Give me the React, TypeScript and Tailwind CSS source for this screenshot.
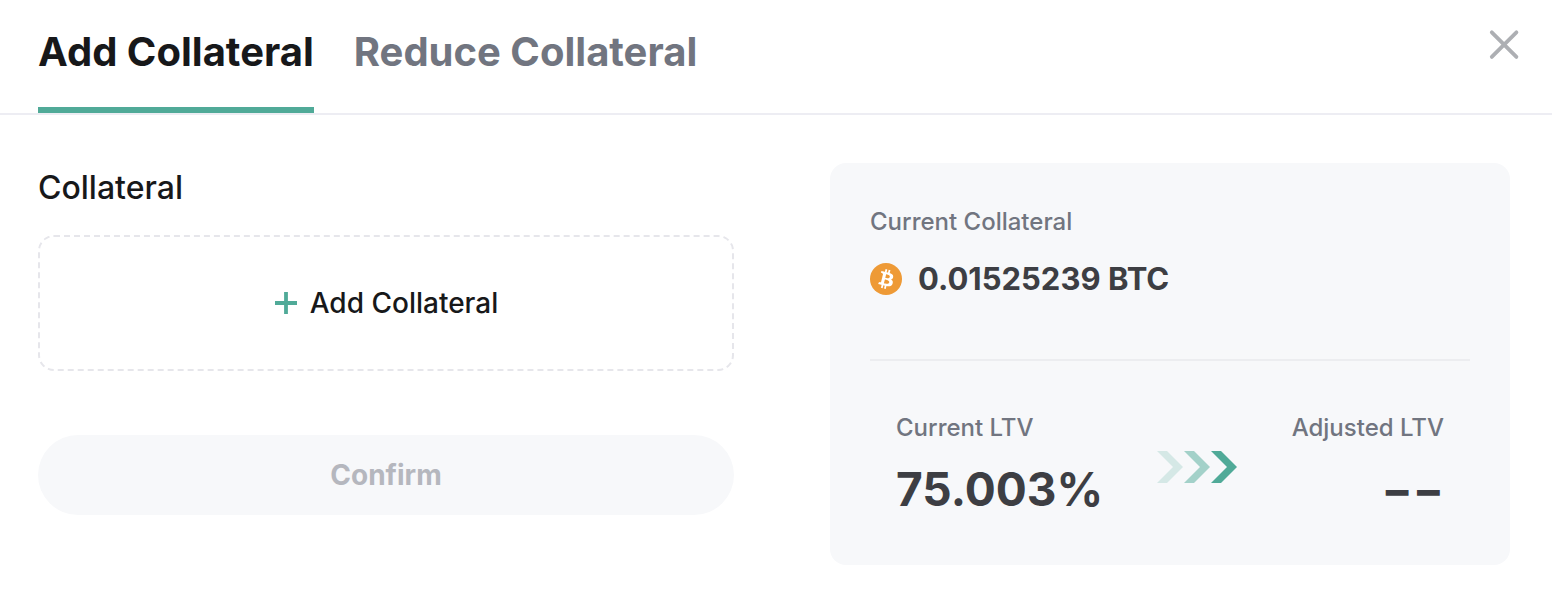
import { useState } from "react";

const tabs = ["Add Collateral", "Reduce Collateral"];

const BitcoinIcon = () => (
  <svg className="w-8 h-8 shrink-0" viewBox="0 0 32 32" aria-hidden="true">
    <circle cx="16" cy="16" r="16" fill="#ee9a36" />
    <path
      fill="#fff"
      d="M23.189 14.02c.314-2.096-1.283-3.223-3.465-3.975l.708-2.84-1.728-.43-.69 2.765c-.454-.114-.92-.22-1.385-.326l.695-2.783L15.596 6l-.708 2.839c-.376-.086-.746-.17-1.104-.26l.002-.009-2.384-.595-.46 1.846s1.283.294 1.256.312c.7.175.826.638.805 1.006l-.806 3.235c.048.012.11.03.18.057l-.183-.045-1.13 4.532c-.086.212-.303.531-.793.41.018.025-1.256-.313-1.256-.313l-.858 1.978 2.25.561c.418.105.828.215 1.231.318l-.715 2.872 1.727.43.708-2.84c.472.127.93.245 1.378.357l-.706 2.828 1.728.43.715-2.866c2.948.558 5.164.333 6.097-2.333.752-2.146-.037-3.385-1.588-4.192 1.13-.26 1.98-1.003 2.207-2.538zm-3.95 5.538c-.533 2.147-4.148.986-5.32.695l.95-3.805c1.172.293 4.929.872 4.37 3.11zm.535-5.569c-.487 1.953-3.495.96-4.47.717l.86-3.45c.975.243 4.118.696 3.61 2.733z"
    />
  </svg>
);

const Arrows = () => (
  <svg
    className="w-20 h-8 shrink-0"
    viewBox="0 0 80 32"
    fill="#50aa98"
    aria-hidden="true"
  >
    <path opacity="0.2" d="M0 0h10l16 16-16 16H0l16-16z" />
    <path opacity="0.5" d="M27 0h10l16 16-16 16H27l16-16z" />
    <path d="M54 0h10l16 16-16 16H54l16-16z" />
  </svg>
);

const Header = () => {
  const [active, setActive] = useState(tabs[0]);

  return (
    <header className="flex items-start justify-between border-b-2 border-[#ededf3] pl-[38px] pr-8">
      <div className="flex gap-10" role="tablist">
        {tabs.map((tab) => (
          <button
            key={tab}
            role="tab"
            aria-selected={tab === active}
            onClick={() => setActive(tab)}
            className={`pt-6 pb-[27px] border-b-6 text-[40px] leading-[56px] font-bold ${
              tab === active
                ? "border-[#50aa98] text-[#17181a]"
                : "border-transparent text-[#717580]"
            }`}
          >
            {tab}
          </button>
        ))}
      </div>
      <button aria-label="Close" className="mt-7">
        <svg
          className="w-8 h-8"
          viewBox="0 0 32 32"
          fill="none"
          stroke="#adafb3"
          strokeWidth="3.8"
          strokeLinecap="round"
        >
          <path d="M3.8 4.3l24.6 24.6M28.4 4.3L3.8 28.9" />
        </svg>
      </button>
    </header>
  );
};

const CollateralForm = () => (
  <div>
    <h2 className="text-[32px] leading-[50px] font-medium text-[#17181a]">
      Collateral
    </h2>
    <button className="mt-[22px] w-full h-[136px] flex items-center justify-center gap-3 rounded-2xl border-2 border-dashed border-[#e6e6eb] text-[28px] font-medium text-[#17181a]">
      <svg
        className="w-6 h-6"
        viewBox="0 0 24 24"
        stroke="#50aa98"
        strokeWidth="3.8"
        aria-hidden="true"
      >
        <path d="M12 1v22M1 12h22" />
      </svg>
      Add Collateral
    </button>
    <button
      disabled
      className="mt-16 w-full h-20 rounded-full bg-[#f7f8fa] text-[28px] font-bold text-[#b5b7be]"
    >
      Confirm
    </button>
  </div>
);

const Summary = () => (
  <div className="rounded-2xl bg-[#f7f8fa] p-10 text-2xl leading-[38px] font-medium text-[#717580]">
    <p>Current Collateral</p>
    <div className="mt-[14px] flex items-center gap-4">
      <BitcoinIcon />
      <span className="text-[31px] leading-[48px] font-bold text-[#3d3e43]">
        0.01525239 BTC
      </span>
    </div>
    <div className="mt-14 border-t-2 border-[#ecedf0]"></div>
    <div className="mt-12 px-[26px] flex items-center justify-between">
      <div>
        <p>Current LTV</p>
        <p className="mt-[6px] text-[46px] leading-[72px] font-bold text-[#3d3e43]">
          75.003%
        </p>
      </div>
      <Arrows />
      <div className="text-right">
        <p>Adjusted LTV</p>
        <p className="mt-[6px] text-[46px] leading-[72px] font-bold text-[#3d3e43]">
          −−
        </p>
      </div>
    </div>
  </div>
);

const App = () => {
  return (
    <main className="min-h-screen bg-white font-['Inter',sans-serif]">
      <Header />
      <section className="grid grid-cols-[696fr_680fr] gap-24 pt-12 pb-7 pl-[38px] pr-[42px]">
        <CollateralForm />
        <Summary />
      </section>
    </main>
  );
};

export default App;
